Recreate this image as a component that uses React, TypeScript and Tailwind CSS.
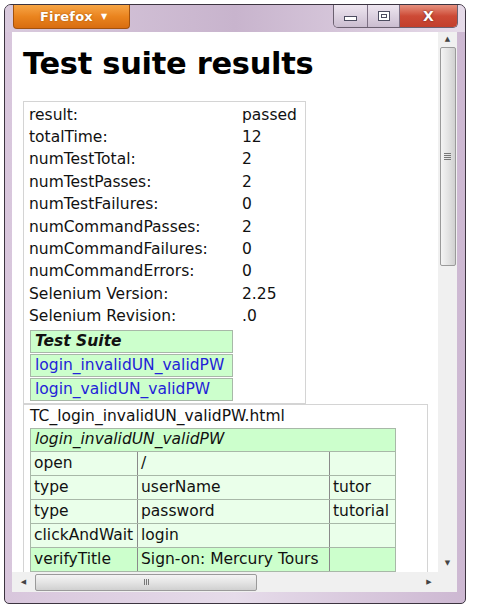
import React from "react";

const F = { fontFamily: '"DejaVu Sans", Verdana, sans-serif' };

const rows: [string, string][] = [
  ["result:", "passed"],
  ["totalTime:", "12"],
  ["numTestTotal:", "2"],
  ["numTestPasses:", "2"],
  ["numTestFailures:", "0"],
  ["numCommandPasses:", "2"],
  ["numCommandFailures:", "0"],
  ["numCommandErrors:", "0"],
  ["Selenium Version:", "2.25"],
  ["Selenium Revision:", ".0"],
];

const cmds: [string, string, string, boolean][] = [
  ["open", "/", "", false],
  ["type", "userName", "tutor", false],
  ["type", "password", "tutorial", false],
  ["clickAndWait", "login", "", false],
  ["verifyTitle", "Sign-on: Mercury Tours", "", true],
];

export default function App() {
  return (
    <div className="w-[480px] h-[613px] bg-white overflow-hidden pt-[4px] pl-[4px]" style={F}>
      <div className="w-[462px] h-[600px] rounded-t-[7px] rounded-b-[5px] border border-[#3c3440] bg-gradient-to-r from-[#d8c6dc] via-[#e6dcea] to-[#cdb8d2] flex flex-col overflow-hidden">
        {/* title bar */}
        <div className="h-[27px] flex items-start justify-between pl-[8px] pr-[7px] bg-gradient-to-r from-[#d9cadd] via-[#c8b4cd] to-[#e6dbe9]">
          <div className="w-[117px] h-[24px] rounded-b-[4px] border border-t-0 border-[#a2520e] bg-gradient-to-b from-[#f6a544] via-[#ea841e] to-[#d86d10] flex items-center justify-center gap-[8px] pr-[6px] pl-[10px]">
            <span className="text-white text-[13px] font-bold tracking-[0.2px]" style={{ fontFamily: '"DejaVu Sans", sans-serif', textShadow: "0 0 2px #a0500a" }}>Firefox</span>
            <span className="text-white text-[8px] leading-none mt-[1px]">▼</span>
          </div>
          <div className="flex h-[23px] rounded-b-[5px] border border-t-0 border-[#6b6070] overflow-hidden">
            <div className="w-[34px] bg-gradient-to-b from-[#eee6f0] to-[#cbbdd0] border-r border-[#7d7084] flex items-center justify-center">
              <div className="w-[13px] h-[5px] mt-[5px] border border-[#4d4d60] bg-white" />
            </div>
            <div className="w-[32px] bg-gradient-to-b from-[#eee6f0] to-[#cbbdd0] border-r border-[#7d7084] flex items-center justify-center">
              <div className="w-[12px] h-[10px] border border-[#4d4d60] bg-white flex items-center justify-center">
                <div className="w-[6px] h-[4px] border border-[#4d4d60]" />
              </div>
            </div>
            <div className="w-[57px] bg-gradient-to-b from-[#e5907e] via-[#cd4a36] to-[#c23f2c] flex items-center justify-center">
              <span className="text-white text-[14px] font-bold leading-none" style={{ textShadow: "0 0 2px #5a1a10" }}>X</span>
            </div>
          </div>
        </div>
        {/* body */}
        <div className="flex pl-[7px] pr-[8px]">
          <div className="w-[426px] h-[540px] bg-white overflow-hidden">
            <div className="pl-[11px] pt-[14px]">
              <h1 className="text-[30.5px] font-bold text-black leading-[36px] tracking-[-0.3px]">Test suite results</h1>
              <div className="mt-[19px] w-[283px] border border-[#d4d4d4] pt-[2px] pl-[5px] text-[15.5px] text-[#111]">
                {rows.map(([k, v]) => (
                  <div key={k} className="flex h-[22.4px] items-center">
                    <div className="w-[213px]">{k}</div>
                    <div>{v}</div>
                  </div>
                ))}
                <div className="w-[203px] ml-[1px] mt-[2px] mb-[2px] flex flex-col gap-[1px]">
                  <div className="h-[23px] bg-[#ccffcc] border border-[#a8b8a8] flex items-center pl-[4px] font-bold italic">Test Suite</div>
                  <div className="h-[23px] bg-[#ccffcc] border border-[#a8b8a8] flex items-center pl-[4px] text-[#2323d8]">login_invalidUN_validPW</div>
                  <div className="h-[23px] bg-[#ccffcc] border border-[#a8b8a8] flex items-center pl-[4px] text-[#2323d8]">login_validUN_validPW</div>
                </div>
              </div>
              <div className="w-[405px] border border-[#d4d4d4] pl-[6px] pt-[1px] text-[15.5px] text-[#111]">
                <div className="h-[22px] flex items-center">TC_login_invalidUN_validPW.html</div>
                <div className="w-[366px] flex flex-col">
                  <div className="h-[24px] bg-[#ccffcc] border border-[#a8b8a8] flex items-center pl-[4px] italic">login_invalidUN_validPW</div>
                  {cmds.map(([a, b, c, g], i) => (
                    <div key={i} className={`h-[24px] flex border-x border-b border-[#a8b8a8] ${g ? "bg-[#ccffcc]" : "bg-[#eaffea]"}`}>
                      <div className="w-[107px] border-r border-[#8a8a8a] flex items-center pl-[3px] whitespace-nowrap">{a}</div>
                      <div className="w-[192px] border-r border-[#8a8a8a] flex items-center pl-[3px] whitespace-nowrap">{b}</div>
                      <div className="flex-1 flex items-center pl-[3px] whitespace-nowrap overflow-hidden">{c}</div>
                    </div>
                  ))}
                </div>
              </div>
            </div>
          </div>
          {/* vertical scrollbar */}
          <div className="w-[19px] h-[540px] bg-[#f0f0f0] flex flex-col items-center">
            <div className="h-[15px] flex items-center justify-center text-[#444] text-[7px] leading-none">▲</div>
            <div className="w-[16px] h-[219px] mt-[0px] rounded-[2px] border border-[#9a9a9a] bg-gradient-to-r from-[#f4f4f4] via-[#e4e4e4] to-[#d0d0d0] flex flex-col items-center justify-center gap-[1px]">
              <div className="w-[7px] h-px bg-[#777]" />
              <div className="w-[7px] h-px bg-[#777]" />
              <div className="w-[7px] h-px bg-[#777]" />
              <div className="w-[7px] h-px bg-[#777]" />
            </div>
            <div className="flex-1" />
            <div className="h-[18px] flex items-center justify-center text-[#444] text-[7px] leading-none">▼</div>
          </div>
        </div>
        {/* horizontal scrollbar */}
        <div className="flex pl-[7px] pr-[8px]">
          <div className="w-[426px] h-[20px] bg-[#f0f0f0] flex items-center">
            <div className="w-[23px] flex items-center justify-center text-[#444] text-[7px] leading-none">◀</div>
            <div className="w-[222px] h-[17px] rounded-[2px] border border-[#9a9a9a] bg-gradient-to-b from-[#f4f4f4] via-[#e4e4e4] to-[#d0d0d0] flex items-center justify-center gap-[1px]">
              <div className="w-px h-[6px] bg-[#777]" />
              <div className="w-px h-[6px] bg-[#777]" />
              <div className="w-px h-[6px] bg-[#777]" />
            </div>
            <div className="flex-1" />
            <div className="w-[18px] flex items-center justify-center text-[#444] text-[7px] leading-none">▶</div>
          </div>
          <div className="w-[19px] h-[20px] bg-[#f0f0f0]" />
        </div>
      </div>
    </div>
  );
}
